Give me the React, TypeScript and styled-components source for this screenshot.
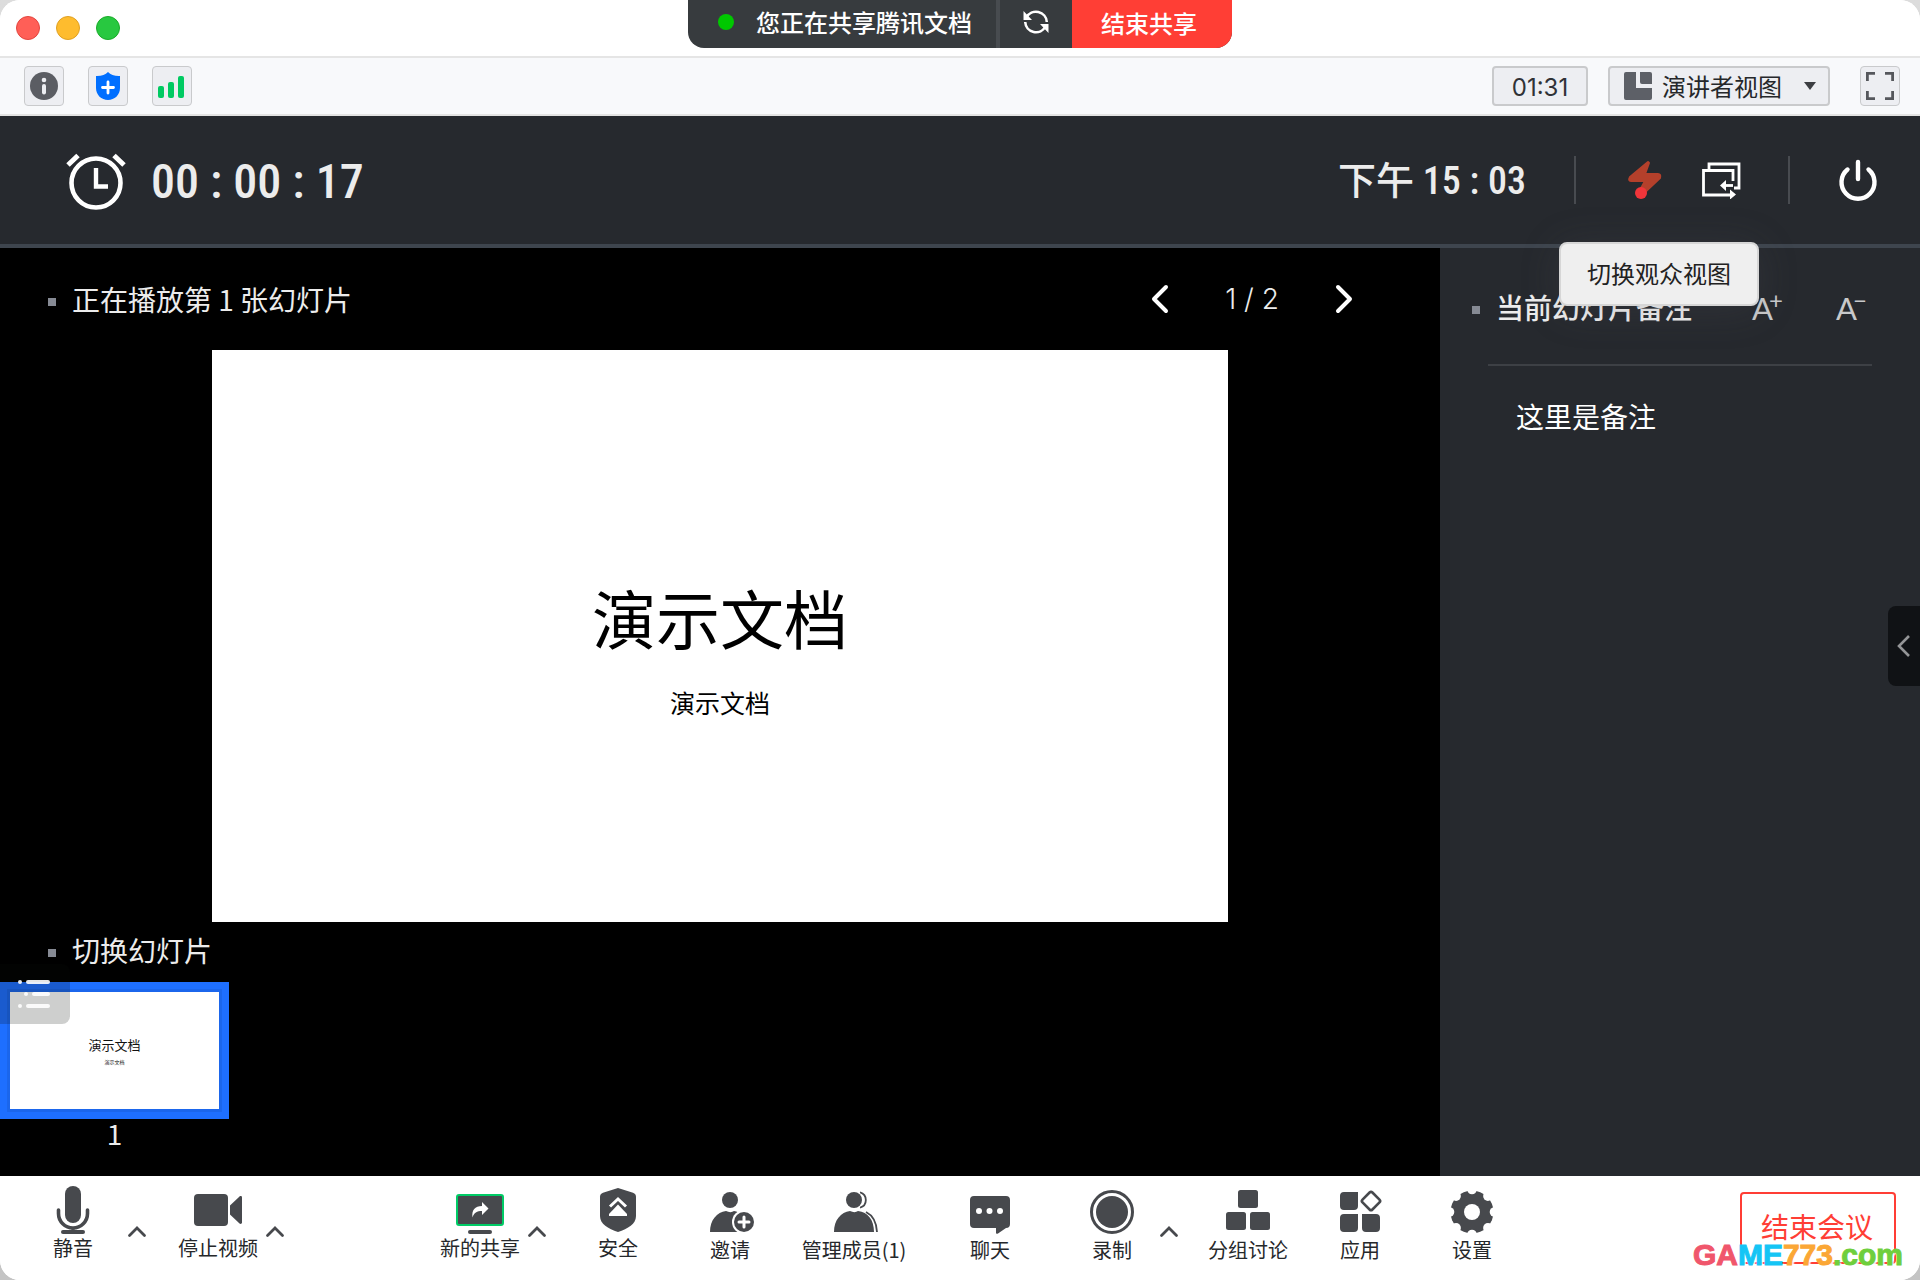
import React from "react";
import styled, { createGlobalStyle, css } from "styled-components";

const sans = `"Liberation Sans", "Noto Sans CJK SC", sans-serif`;
const cjk = `"Noto Sans CJK SC", sans-serif`;
const narrow = `"Roboto Condensed", "Noto Sans CJK SC", sans-serif`;

const GlobalStyle = createGlobalStyle`
  *, *::before, *::after { box-sizing: border-box; }
  body { margin: 0; background: linear-gradient(#dcdcdc, #c4c4c4); font-family: ${cjk}; }
  button { margin: 0; padding: 0; border: 0; background: none; font: inherit; color: inherit; cursor: pointer; }
  h1, h2, p { margin: 0; font-weight: 400; }
  svg { display: block; flex: none; }
`;

const Window = styled.div`
  display: flex;
  flex-direction: column;
  min-height: 100vh;
  border-radius: 20px;
  overflow: hidden;
  background: #fff;
`;

/* ---------- title bar ---------- */
const TitleBar = styled.header`
  display: grid;
  grid-template-columns: 1fr auto 1fr;
  height: 58px;
  border-bottom: 2px solid #e5e5e5;
  background: #fff;
`;
const Lights = styled.div`
  display: flex;
  align-items: center;
  gap: 16px;
  padding-left: 16px;
`;
const Light = styled.button<{ $fill: string; $ring: string }>`
  width: 24px;
  height: 24px;
  border-radius: 50%;
  background: ${(p) => p.$fill};
  border: 1px solid ${(p) => p.$ring};
`;
const SharePill = styled.div`
  display: flex;
  height: 48px;
  border-radius: 0 0 16px 16px;
  overflow: hidden;
  background: #373b3e;
  color: #fff;
  font-size: 24px;
  line-height: 44px;
  font-weight: 500;
`;
const ShareStatus = styled.div`
  display: flex;
  align-items: center;
  gap: 22px;
  padding: 0 24px 4px 30px;
  border-right: 4px solid #484c50;
`;
const LiveDot = styled.span`
  width: 16px;
  height: 16px;
  border-radius: 50%;
  background: #00c800;
`;
const RefreshButton = styled.button`
  display: grid;
  place-items: center;
  width: 72px;
  padding-bottom: 4px;
`;
const StopShare = styled.button`
  width: 160px;
  padding: 0 6px 2px 0;
  background: #ff3e35;
  font-weight: 500;
`;

/* ---------- tool bar ---------- */
const ToolBar = styled.div`
  display: flex;
  align-items: center;
  height: 58px;
  padding: 0 20px 0 24px;
  border-bottom: 2px solid #e3e3e3;
  background: #f8f9fb;
`;
const ToolGroup = styled.div`
  display: flex;
  gap: 24px;
`;
const toolBox = css`
  height: 40px;
  border: 2px solid #c9cacc;
  border-radius: 4px;
  background: #edeef2;
`;
const ToolButton = styled.button`
  ${toolBox}
  display: grid;
  place-items: center;
  width: 40px;
  border-width: 1px;
`;
const Elapsed = styled.time`
  ${toolBox}
  width: 96px;
  margin: 0 20px 0 auto;
  font: 24px/40px Inter, ${sans};
  text-align: center;
  color: #303236;
`;
const ViewPicker = styled.label`
  ${toolBox}
  display: flex;
  align-items: center;
  gap: 10px;
  width: 222px;
  margin-right: 30px;
  padding: 0 12px 0 14px;
`;
const ViewSelect = styled.select`
  appearance: none;
  flex: 1;
  min-width: 0;
  padding: 0;
  border: 0;
  background: none;
  font: 24px/36px ${cjk};
  color: #26282b;
`;

/* ---------- presenter header ---------- */
const PresenterBar = styled.div`
  display: flex;
  align-items: center;
  height: 132px;
  padding: 0 40px 0 65px;
  border-bottom: 4px solid #3e454e;
  background: #26292e;
  color: #ececec;
`;
const Timer = styled.time`
  margin-left: 24px;
  padding-top: 4px;
  font: 500 48px/64px ${narrow};
  white-space: pre;
`;
const Clock = styled.time`
  margin-left: auto;
  padding-top: 2px;
  font: 500 38px/64px ${narrow};
  white-space: pre;
`;
const Rule = styled.span<{ $left: number; $right: number }>`
  width: 2px;
  height: 48px;
  margin: 0 ${(p) => p.$right}px 0 ${(p) => p.$left}px;
  background: #484b50;
`;
const BarButton = styled.button`
  display: grid;
  place-items: center;
  width: 44px;
  height: 48px;
`;
const SwitchView = styled.div`
  position: relative;
  margin-left: 32px;
`;
const Tooltip = styled.div`
  position: absolute;
  z-index: 2;
  top: 86px;
  right: -16px;
  width: 200px;
  padding-bottom: 2px;
  border: 2px solid #d6d6d6;
  border-radius: 8px;
  background: #efefef;
  box-shadow: 0 4px 40px rgba(90, 90, 100, 0.2);
  color: #222;
  font-size: 24px;
  line-height: 58px;
  text-align: center;
`;

/* ---------- stage ---------- */
const Body = styled.main`
  display: grid;
  grid-template-columns: 3fr 1fr;
  flex: 1;
  background: #000;
`;
const Stage = styled.section`
  position: relative;
  display: flex;
  flex-direction: column;
  min-width: 0;
  color: #ececec;
`;
const SectionHead = styled.div<{ $height: number; $bottom?: number }>`
  display: flex;
  align-items: center;
  height: ${(p) => p.$height}px;
  padding: 0 76px ${(p) => p.$bottom ?? 0}px 48px;
`;
const SectionTitle = styled.h2<{ $strong?: boolean }>`
  display: flex;
  align-items: center;
  gap: 16px;
  font-size: 28px;
  line-height: 40px;
  font-weight: ${(p) => (p.$strong ? 500 : 400)};
  white-space: nowrap;
  &::before {
    content: "";
    width: 8px;
    height: 8px;
    margin-top: 6px;
    background: #868a94;
  }
`;
const Pager = styled.nav`
  display: flex;
  align-items: center;
  margin-left: auto;
  font: 300 28px/40px Inter, ${sans};
  white-space: pre;
`;
const PageCount = styled.span`
  width: 144px;
  text-align: center;
`;
const PageButton = styled.button`
  display: grid;
  place-items: center;
  width: 40px;
  height: 40px;
`;
const Slide = styled.article`
  display: flex;
  flex-direction: column;
  align-items: center;
  justify-content: center;
  gap: 20px;
  align-self: center;
  width: 1016px;
  max-width: 100%;
  aspect-ratio: 16 / 9;
  padding-top: 20px;
  background: #fff;
  color: #000;
`;
const SlideTitle = styled.h1`
  font-size: 64px;
  line-height: 92px;
`;
const SlideSub = styled.p`
  font-size: 25px;
  line-height: 40px;
`;
const Strip = styled.div`
  display: flex;
`;
const Thumb = styled.button`
  display: block;
  width: 229px;
  text-align: center;
`;
const ThumbSlide = styled.span`
  display: flex;
  flex-direction: column;
  align-items: center;
  justify-content: center;
  height: 137px;
  padding-top: 4px;
  border: 7px solid #1e6fff;
  outline: 3px solid #1b66ec;
  outline-offset: -10px;
  background: #fff;
  color: #111;
`;
const ThumbTitle = styled.span`
  font-size: 13px;
  line-height: 20px;
`;
const ThumbSub = styled.span`
  font-size: 5px;
  line-height: 14px;
`;
const ThumbNumber = styled.span`
  display: block;
  font: 28px/28px ${cjk};
`;
const OutlineToggle = styled.button`
  position: absolute;
  left: 0;
  bottom: 152px;
  display: grid;
  place-items: center;
  width: 70px;
  height: 60px;
  padding-right: 2px;
  border-radius: 0 8px 8px 0;
  background: rgba(8, 16, 12, 0.2);
`;

/* ---------- notes ---------- */
const Notes = styled.aside`
  position: relative;
  padding: 0 48px 0 32px;
  background: #26292e;
  color: #ececec;
`;
const NotesHead = styled.div`
  display: flex;
  align-items: center;
  height: 118px;
  margin-left: 16px;
  border-bottom: 2px solid #3d4045;
`;
const NotesTitleWrap = styled.div`
  margin: 2px auto 0 -16px;
`;
const FontButton = styled.button`
  display: flex;
  align-items: flex-start;
  width: 36px;
  margin: 4px 0 0 48px;
  font: 400 31px/36px Lato, ${sans};
  color: #c8c9cb;
  & > sup {
    margin-left: -4px;
    font-size: 24px;
    line-height: 20px;
    vertical-align: baseline;
  }
`;
const NoteText = styled.p`
  margin: 30px 0 0 44px;
  font-size: 28px;
  line-height: 40px;
  color: #fff;
`;
const Handle = styled.button`
  position: absolute;
  right: 0;
  top: 358px;
  display: grid;
  place-items: center;
  width: 32px;
  height: 80px;
  border-radius: 8px 0 0 8px;
  background: #101215;
`;

/* ---------- footer ---------- */
const Footer = styled.footer`
  display: flex;
  height: 104px;
  padding: 0 24px 0 20px;
  background: #fff;
  color: #26282b;
`;
const Group = styled.div<{ $left?: number; $right?: number }>`
  display: flex;
  margin: 0 ${(p) => p.$right ?? 0}px 0 ${(p) => p.$left ?? 0}px;
`;
const Action = styled.button<{ $width?: number; $tight?: boolean }>`
  display: flex;
  flex-direction: column;
  align-items: center;
  width: ${(p) => p.$width ?? 112}px;
  padding-top: 10px;
  font-size: 20px;
  line-height: ${(p) => (p.$tight ? 28 : 32)}px;
  white-space: nowrap;
`;
const MoreButton = styled.button`
  display: grid;
  justify-items: center;
  align-content: start;
  width: 22px;
  padding-top: 48px;
`;
const EndWrap = styled.div`
  position: relative;
  margin-left: auto;
  padding-top: 16px;
`;
const EndMeeting = styled.button`
  width: 156px;
  height: 72px;
  padding: 0 2px 4px 0;
  border: 2px solid #ff3e35;
  border-radius: 4px;
  color: #ff3e35;
  font-size: 28px;
  line-height: 64px;
`;
const Watermark = styled.div`
  position: absolute;
  right: -7px;
  bottom: 8px;
  display: flex;
  font: 900 30px/34px "Liberation Sans", sans-serif;
  pointer-events: none;
`;
const Tint = styled.span<{ $color: string }>`
  color: ${(p) => p.$color};
  -webkit-text-stroke: 1px ${(p) => p.$color};
  text-shadow: 2px 2px 1px rgba(255, 255, 255, 0.9);
`;

const INK = "#47494d";

const notches = Array.from({ length: 8 }, (_, i) => {
  const a = (i * Math.PI) / 4;
  return { x: 24 + 22.5 * Math.sin(a), y: 26 - 22.5 * Math.cos(a) };
});

const icons: Record<string, React.ReactNode> = {
  mic: (
    <>
      <rect x="16" y="0" width="16" height="37" rx="8" fill={INK} />
      <path d="M9.500 24v3.500a14.500 14.500 0 0 0 29 0V24M24 42v4" fill="none" stroke={INK} strokeWidth="3.600" strokeLinecap="round" />
      <rect x="12" y="44" width="24" height="4" rx="2" fill={INK} />
    </>
  ),
  video: (
    <>
      <rect x="0" y="8" width="34" height="32" rx="4" fill={INK} />
      <path d="M36 19.500l9.500-9c1-.8 2.500-.3 2.500 1v25c0 1.300-1.500 1.800-2.500 1l-9.500-9z" fill={INK} />
    </>
  ),
  share: (
    <>
      <rect x="1" y="9" width="46" height="30" rx="2" fill={INK} stroke="#00cc66" strokeWidth="2" />
      <path d="M26 16l6.500 6.500L26 29v-4c-5 0-8 1.500-9.500 6.500C15.500 24 19 20 26 20z" fill="#fff" />
      <rect x="12" y="44" width="24" height="4" rx="2" fill={INK} />
    </>
  ),
  shield: (
    <>
      <path d="M24 2l15 4.800c2 .7 3 2 3 4V30c0 8-8 12.500-18 16C14 42.500 6 38 6 30V10.800c0-2 1-3.300 3-4z" fill={INK} />
      <path d="M24 18.500l9 9.500v2H15v-2z" fill="#fff" />
      <path d="M16 20.500l8-7.500 8 7.500" fill="none" stroke="#fff" strokeWidth="3" />
    </>
  ),
  invite: (
    <>
      <circle cx="24" cy="14" r="8" fill={INK} />
      <path d="M4 46c0-12 7-20 16-21 3 1.500 6 1.500 8 0 3 .4 6 2 8 4v17z" fill={INK} />
      <circle cx="38" cy="36" r="12" fill="#fff" />
      <circle cx="38" cy="36" r="10" fill={INK} />
      <path d="M38 31v10M33 36h10" stroke="#fff" strokeWidth="3" strokeLinecap="round" />
    </>
  ),
  members: (
    <>
      <path d="M30 6.300a8 8 0 0 1 0 15.400M36 26c6 3 10.500 10 11 20" fill="none" stroke={INK} strokeWidth="1.800" />
      <circle cx="24" cy="14" r="9" fill="#fff" />
      <circle cx="24" cy="14" r="8" fill={INK} />
      <path d="M4 46c0-12 7-20 16-21 3 1.500 6 1.500 8 0 10 1 16 9 16 21z" fill={INK} />
    </>
  ),
  chat: (
    <>
      <path d="M8 10h32a4 4 0 0 1 4 4v24a4 4 0 0 1-4 4l-8 5.500c-1.200.7-2 .3-2-1V42H8a4 4 0 0 1-4-4V14a4 4 0 0 1 4-4z" fill={INK} />
      <circle cx="13" cy="25" r="3" fill="#fff" />
      <circle cx="23.500" cy="25" r="3" fill="#fff" />
      <circle cx="34" cy="25" r="3" fill="#fff" />
    </>
  ),
  record: (
    <>
      <circle cx="24" cy="26" r="20.500" fill="none" stroke={INK} strokeWidth="3" />
      <circle cx="24" cy="26" r="16" fill={INK} />
    </>
  ),
  rooms: (
    <>
      <rect x="14" y="4" width="20" height="18" rx="2.500" fill={INK} />
      <rect x="2" y="26" width="20" height="18" rx="2.500" fill={INK} />
      <rect x="26" y="26" width="20" height="18" rx="2.500" fill={INK} />
    </>
  ),
  apps: (
    <>
      <path d="M8 6h14v14a4 4 0 0 1-4 4H8a4 4 0 0 1-4-4V10a4 4 0 0 1 4-4zM8 28h14v14a4 4 0 0 1-4 4H8a4 4 0 0 1-4-4V32a4 4 0 0 1 4-4zM26 28h14a4 4 0 0 1 4 4v10a4 4 0 0 1-4 4H30a4 4 0 0 1-4-4z" fill={INK} />
      <rect x="28" y="8" width="14" height="14" rx="2" transform="rotate(45 35 15)" fill="none" stroke={INK} strokeWidth="2.600" />
    </>
  ),
  gear: (
    <>
      <circle cx="24" cy="26" r="21.500" fill={INK} />
      {notches.map((n, i) => (
        <circle key={i} cx={n.x} cy={n.y} r="4.800" fill="#fff" />
      ))}
      <circle cx="24" cy="26" r="8" fill="#fff" />
    </>
  ),
};

const ActionItem = ({ icon, label, width, tight }: { icon: string; label: string; width?: number; tight?: boolean }) => (
  <Action $width={width} $tight={tight}>
    <svg width="48" height="48" viewBox="0 0 48 48" aria-hidden="true">{icons[icon]}</svg>
    {label}
  </Action>
);

const More = ({ label }: { label: string }) => (
  <MoreButton aria-label={label}>
    <svg width="20" height="14" viewBox="0 0 20 14"><path d="M2.500 11.500L10 4l7.500 7.500" fill="none" stroke={INK} strokeWidth="2.800" strokeLinecap="round" /></svg>
  </MoreButton>
);

export default function App() {
  return (
    <>
      <GlobalStyle />
      <Window>
        <TitleBar>
          <Lights>
            <Light $fill="#ff5f57" $ring="#e2463f" aria-label="关闭" />
            <Light $fill="#febc2e" $ring="#dfa023" aria-label="最小化" />
            <Light $fill="#28c840" $ring="#1aab29" aria-label="缩放" />
          </Lights>
          <SharePill>
            <ShareStatus><LiveDot />您正在共享腾讯文档</ShareStatus>
            <RefreshButton aria-label="刷新">
              <svg width="26" height="26" viewBox="0 0 26 26" fill="none" stroke="#fff" strokeWidth="2.600">
                <path d="M3.500 8.500A10.800 10.800 0 0 1 23.800 13M22.500 17.500A10.800 10.800 0 0 1 2.200 13" />
                <path d="M.5 2v9h8.500zM25.500 24v-9H17z" fill="#fff" stroke="none" />
              </svg>
            </RefreshButton>
            <StopShare>结束共享</StopShare>
          </SharePill>
        </TitleBar>

        <ToolBar>
          <ToolGroup>
            <ToolButton aria-label="会议信息">
              <svg width="28" height="28" viewBox="0 0 28 28"><circle cx="14" cy="14" r="14" fill="#5b5d63" /><circle cx="14" cy="8" r="2.300" fill="#edeef2" /><rect x="12" y="12" width="4" height="10.500" rx="2" fill="#edeef2" /></svg>
            </ToolButton>
            <ToolButton aria-label="安全">
              <svg width="28" height="28" viewBox="0 0 28 28"><path d="M14 0c2.500 2.500 6 4 11 4h1v12c0 7-5.500 12-12 12S2 23 2 16V4h1c5 0 8.500-1.500 11-4z" fill="#006fff" /><path d="M14 10v11M8.500 15.500h11" stroke="#fff" strokeWidth="2.800" strokeLinecap="round" /></svg>
            </ToolButton>
            <ToolButton aria-label="网络状态">
              <svg width="28" height="28" viewBox="0 0 28 28" fill="#00ca62"><rect x="0" y="14" width="6" height="12" rx="2" /><rect x="10" y="10" width="6" height="16" rx="2" /><rect x="20" y="4" width="6" height="22" rx="2" /></svg>
            </ToolButton>
          </ToolGroup>
          <Elapsed>01:31</Elapsed>
          <ViewPicker>
            <svg width="28" height="28" viewBox="0 0 28 28" fill="#5d6067"><path d="M2 0h10v16h16v10a2 2 0 0 1-2 2H2a2 2 0 0 1-2-2V2a2 2 0 0 1 2-2z" /><path d="M16 0h10a2 2 0 0 1 2 2v10H18a2 2 0 0 1-2-2z" /></svg>
            <ViewSelect aria-label="视图" defaultValue="speaker">
              <option value="speaker">演讲者视图</option>
            </ViewSelect>
            <svg width="12" height="8" viewBox="0 0 12 8"><path d="M0 0h12L6 8z" fill="#3c3e42" /></svg>
          </ViewPicker>
          <ToolButton aria-label="全屏">
            <svg width="28" height="28" viewBox="0 0 28 28" fill="none" stroke="#55575c" strokeWidth="2.800"><path d="M1.400 9V1.400H9M19 1.400h7.600V9M26.600 19v7.600H19M9 26.600H1.400V19" /></svg>
          </ToolButton>
        </ToolBar>

        <PresenterBar>
          <svg width="62" height="62" viewBox="0 0 62 62" fill="none" stroke="#fff">
            <circle cx="31" cy="34" r="24.500" strokeWidth="4.600" />
            <path d="M31 19v18.500h12" strokeWidth="4.400" />
            <path d="M3 16l10-9.500M59 16L49 6.500" strokeWidth="5" />
          </svg>
          <Timer>00 : 00 : 17</Timer>
          <Clock>下午 15 : 03</Clock>
          <Rule $left={48} $right={47} />
          <BarButton aria-label="激光笔">
            <svg width="36" height="40" viewBox="0 0 36 40"><path d="M21 2L3 17q-2 4 1 4h14L12 32l4 2L33 18q1-4-2-4H18L22 3z" fill="#b4402b" stroke="#b4402b" strokeWidth="2" strokeLinejoin="round" /><circle cx="14" cy="33" r="6" fill="#f0353a" /></svg>
          </BarButton>
          <SwitchView>
            <BarButton aria-label="切换观众视图">
              <svg width="40" height="38" viewBox="0 0 40 38" fill="none" stroke="#fff" strokeWidth="2.800">
                <path d="M8 9V3h30v24h-5M32 20V9.500H2.500v24.500H30" />
                <path d="M21 24.500h11" />
                <path d="M25 19v11l-6-5.500zM29 28.500v10l6-5z" fill="#fff" stroke="none" />
              </svg>
            </BarButton>
            <Tooltip role="tooltip">切换观众视图</Tooltip>
          </SwitchView>
          <Rule $left={45} $right={46} />
          <BarButton aria-label="退出放映">
            <svg width="40" height="42" viewBox="0 0 40 42" fill="none" stroke="#fff" strokeWidth="4.400" strokeLinecap="round"><path d="M20 3v17M9.500 10.500a16.500 16.500 0 1 0 21 0" /></svg>
          </BarButton>
        </PresenterBar>

        <Body>
          <Stage>
            <SectionHead $height={102}>
              <SectionTitle>正在播放第 1 张幻灯片</SectionTitle>
              <Pager aria-label="翻页">
                <PageButton aria-label="上一张"><svg width="20" height="30" viewBox="0 0 20 30"><path d="M16 3L4 15l12 12" fill="none" stroke="#fff" strokeWidth="4" strokeLinecap="round" strokeLinejoin="round" /></svg></PageButton>
                <PageCount>1 / 2</PageCount>
                <PageButton aria-label="下一张"><svg width="20" height="30" viewBox="0 0 20 30"><path d="M4 3l12 12L4 27" fill="none" stroke="#fff" strokeWidth="4" strokeLinecap="round" strokeLinejoin="round" /></svg></PageButton>
              </Pager>
            </SectionHead>
            <Slide>
              <SlideTitle>演示文档</SlideTitle>
              <SlideSub>演示文档</SlideSub>
            </Slide>
            <SectionHead $height={60} $bottom={4}>
              <SectionTitle>切换幻灯片</SectionTitle>
            </SectionHead>
            <Strip>
              <Thumb>
                <ThumbSlide>
                  <ThumbTitle>演示文档</ThumbTitle>
                  <ThumbSub>演示文档</ThumbSub>
                </ThumbSlide>
                <ThumbNumber>1</ThumbNumber>
              </Thumb>
            </Strip>
            <OutlineToggle aria-label="目录">
              <svg width="32" height="28" viewBox="0 0 32 28" fill="#fff" opacity="0.9"><circle cx="2" cy="2" r="2" /><rect x="8" width="24" height="4" rx="2" /><circle cx="8" cy="14" r="2" /><rect x="14" y="12" width="18" height="4" rx="2" /><circle cx="2" cy="26" r="2" /><rect x="8" y="24" width="24" height="4" rx="2" /></svg>
            </OutlineToggle>
          </Stage>
          <Notes>
            <NotesHead>
              <NotesTitleWrap><SectionTitle $strong>当前幻灯片备注</SectionTitle></NotesTitleWrap>
              <FontButton aria-label="放大字号">A<sup>+</sup></FontButton>
              <FontButton aria-label="缩小字号">A<sup>−</sup></FontButton>
            </NotesHead>
            <NoteText>这里是备注</NoteText>
            <Handle aria-label="展开侧栏">
              <svg width="14" height="24" viewBox="0 0 14 24"><path d="M12 2L2 12l10 10" fill="none" stroke="#949597" strokeWidth="2.600" /></svg>
            </Handle>
          </Notes>
        </Body>

        <Footer>
          <Group><ActionItem icon="mic" label="静音" width={106} tight /><More label="音频选项" /></Group>
          <Group $left={24}><ActionItem icon="video" label="停止视频" width={92} tight /><More label="视频选项" /></Group>
          <Group $left={148} $right={14}><ActionItem icon="share" label="新的共享" width={92} tight /><More label="共享选项" /></Group>
          <Group>
            <ActionItem icon="shield" label="安全" tight />
            <ActionItem icon="invite" label="邀请" />
            <ActionItem icon="members" label="管理成员(1)" width={136} />
            <ActionItem icon="chat" label="聊天" width={136} />
          </Group>
          <Group $left={8} $right={12}><ActionItem icon="record" label="录制" width={92} /><More label="录制选项" /></Group>
          <Group>
            <ActionItem icon="rooms" label="分组讨论" />
            <ActionItem icon="apps" label="应用" />
            <ActionItem icon="gear" label="设置" />
          </Group>
          <EndWrap>
            <EndMeeting>结束会议</EndMeeting>
            <Watermark>
              <Tint $color="#f0566c">GA</Tint>
              <Tint $color="#15c5f5">ME</Tint>
              <Tint $color="#fba735">773</Tint>
              <Tint $color="#6fcf3c">.com</Tint>
            </Watermark>
          </EndWrap>
        </Footer>
      </Window>
    </>
  );
}
